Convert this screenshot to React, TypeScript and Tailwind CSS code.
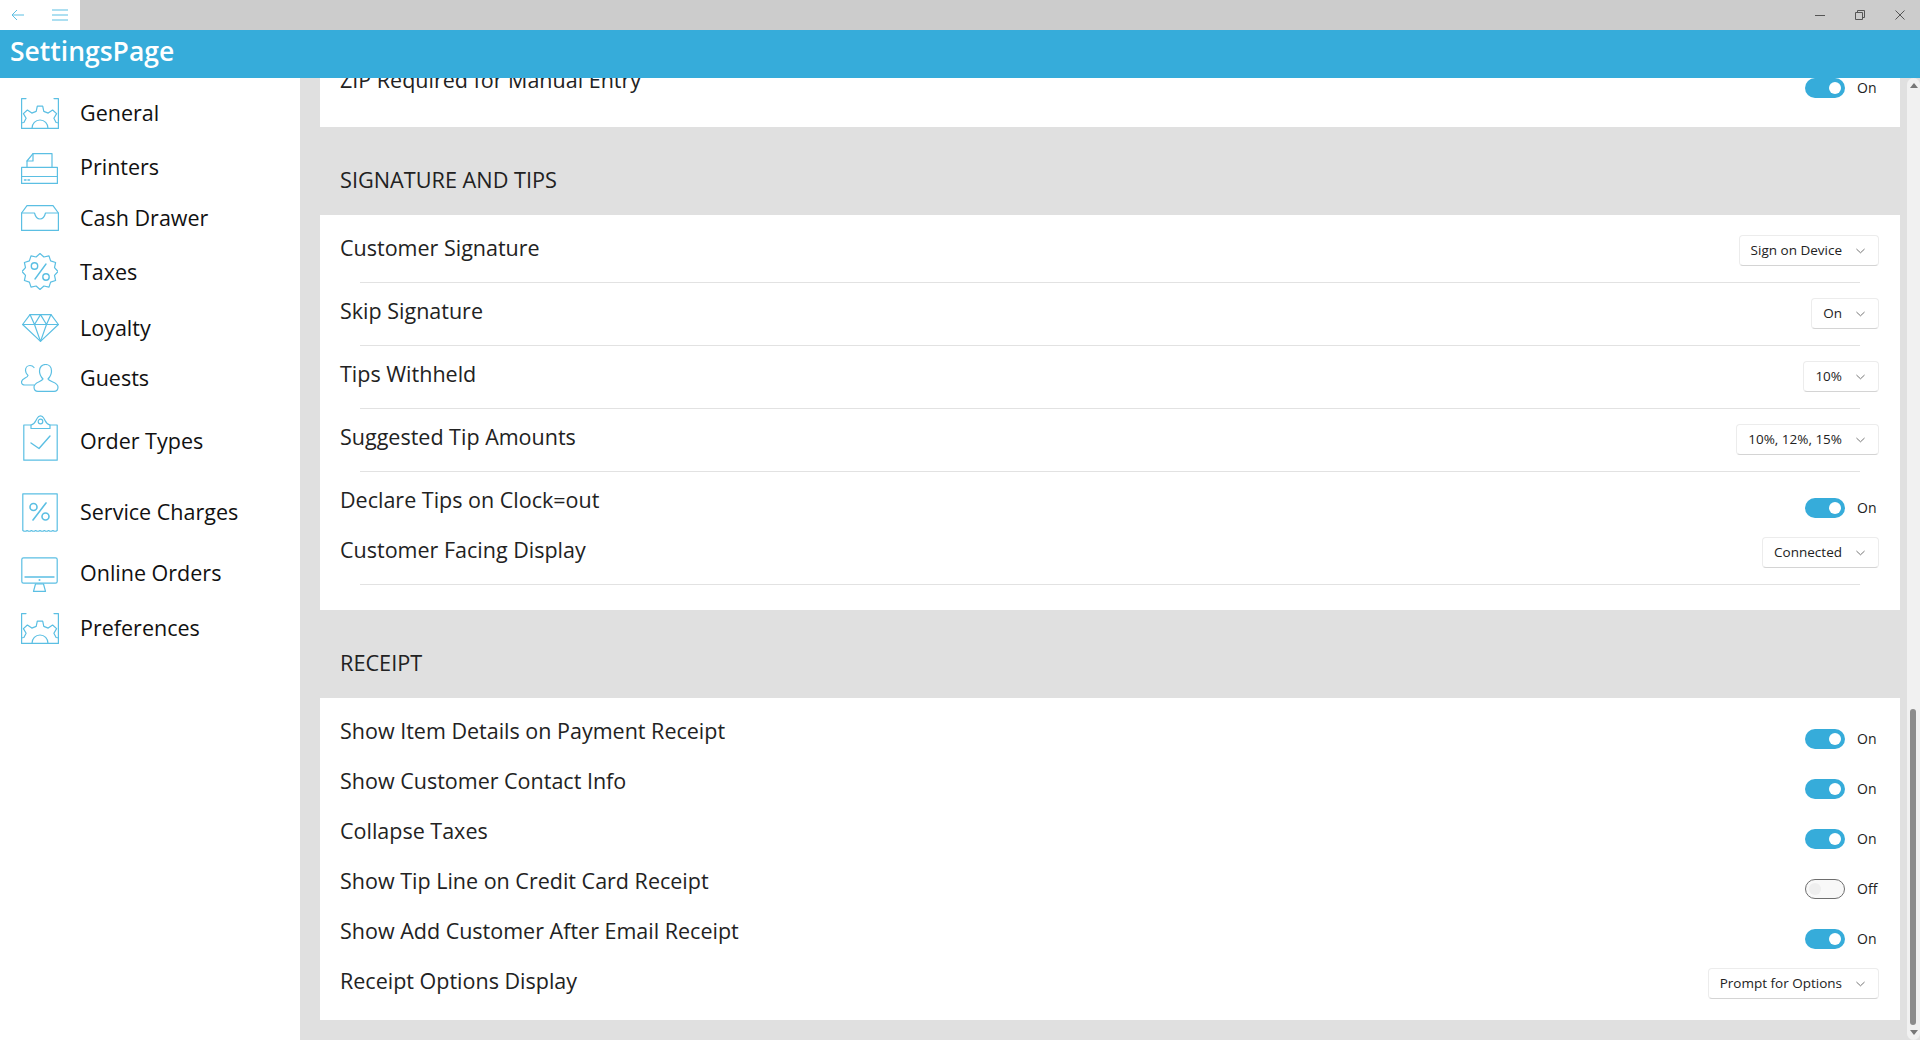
import React from "react";

const blue = "#36acda";
const stroke = "#5bbfe3";

function Ic({ children, w, h, cls }: { children: React.ReactNode; w: number; h: number; cls: string }) {
  return (
    <svg viewBox={`0 0 ${w} ${h}`} className={cls} fill="none" stroke={stroke} strokeWidth={1.2} strokeLinecap="round" strokeLinejoin="round">
      {children}
    </svg>
  );
}

function polar(cx: number, cy: number, r: number, deg: number) {
  const a = (deg * Math.PI) / 180;
  return `${(cx + r * Math.sin(a)).toFixed(1)} ${(cy - r * Math.cos(a)).toFixed(1)}`;
}

function gearPath() {
  const cx = 19;
  const cy = 30;
  const centers = [-84, -42, 0, 42, 84];
  const pts: string[] = [polar(cx, cy, 16, -100)];
  for (const c of centers) {
    pts.push(polar(cx, cy, 17, c - 13));
    pts.push(polar(cx, cy, 22, c - 7));
    pts.push(polar(cx, cy, 22, c + 7));
    pts.push(polar(cx, cy, 17, c + 13));
  }
  pts.push(polar(cx, cy, 16, 100));
  return "M" + pts.join("L");
}

function starPath() {
  const pts: string[] = [];
  for (let i = 0; i < 24; i++) {
    pts.push(polar(18, 18.5, i % 2 === 0 ? 18 : 15, i * 15));
  }
  return "M" + pts.join("L") + "Z";
}

const Gear = () => (
  <Ic w={38} h={31} cls="w-[38px] h-[31px]">
    <path d="M5 .6H.6V30.400H37.400V.6H33" />
    <path d={gearPath()} />
    <path d="M11 30.400c0-5 3.500-8.400 8-8.400s8 3.400 8 8.400" />
  </Ic>
);

const icons: Record<string, React.ReactNode> = {
  General: <Gear />,
  Printers: (
    <Ic w={37} h={31} cls="w-[37px] h-[31px] mt-[2px]">
      <path d="M6 14V8L12 .6H31V14" />
      <path d="M6 8H12V.6" />
      <path d="M.6 14.400H36.400V30.400H.6z" />
      <path d="M.6 23.500H36.400" />
      <path d="M3.500 27h1.500M7 27h1.500" strokeWidth={1.5} />
    </Ic>
  ),
  "Cash Drawer": (
    <Ic w={38} h={26} cls="w-[38px] h-[26px]">
      <path d="M6 .6H32L37.400 8V25.400H.6V8z" />
      <path d="M.6 8H13.500c1 4 2.500 6 5.500 6s4.500-2 5.500-6H37.400" />
    </Ic>
  ),
  Taxes: (
    <Ic w={36} h={37} cls="w-9 h-[37px] ml-[1px]">
      <path d={starPath()} />
      <path d="M24 11L13 26" strokeWidth={1.4} />
      <circle cx="12.500" cy="13" r="3.200" strokeWidth={1.4} />
      <circle cx="24" cy="24" r="3.200" strokeWidth={1.4} />
    </Ic>
  ),
  Loyalty: (
    <Ic w={37} h={28} cls="w-[37px] h-7 ml-[1px]">
      <path d="M8 .6H29L36.400 10.500 18.500 27.400 .6 10.500z" />
      <path d="M.6 10.500H36.400M8 .6L12.500 10.500 18.500 27.400 24.500 10.500 29 .6M12.500 10.500L18.500 .6 24.500 10.500" />
    </Ic>
  ),
  Guests: (
    <Ic w={39} h={28} cls="w-[39px] h-7">
      <path d="M13 21H4c-2.500 0-3.500-1-3.500-3 0-3.500 6-4 6.500-6.500C5.500 10 4.500 8 4.500 6.500 4.500 3.500 6.500 1.500 9 1.500c1.500 0 3 .6 4 2" />
      <path d="M13 23c0-5 7.500-5 9-8-2-2-3.500-4.500-3.500-8 0-4 2.500-6.500 6-6.500s6 2.500 6 6.500c0 3.500-1.500 6-3.500 8 1.500 3 10 3 10 8 0 3-1.500 4.400-4 4.400H17c-2.500 0-4-1.400-4-4.400z" />
    </Ic>
  ),
  "Order Types": (
    <Ic w={35} h={46} cls="w-[35px] h-[46px] ml-[2px] -mt-[7px]">
      <path d="M8 10H.8V45.200H34.200V10H27" />
      <path d="M8 13.500V10c4-1 4.500-4 6-6.500 2-3.600 5-3.600 7 0C22.500 6 23 9 27 10v3.500z" />
      <circle cx="17.500" cy="6.500" r="2.300" />
      <path d="M8 28l8 5.500L27 21" strokeWidth={1.4} />
    </Ic>
  ),
  "Service Charges": (
    <Ic w={36} h={39} cls="w-9 h-[39px] ml-[1px]">
      <path d="M.8.8H35.200V37.500c-1.400 1-2.800 1-4.300 0-1.400 1-2.800 1-4.300 0-1.400 1-2.800 1-4.300 0-1.400 1-2.800 1-4.300 0-1.400 1-2.800 1-4.300 0-1.400 1-2.800 1-4.300 0-1.400 1-2.800 1-4.300 0-1.400 1-2.800 1-4.300 0z" />
      <path d="M24 10L11 27" strokeWidth={1.6} />
      <circle cx="11.500" cy="14" r="3.500" strokeWidth={1.6} />
      <circle cx="23.500" cy="23.500" r="3.500" strokeWidth={1.6} />
    </Ic>
  ),
  "Online Orders": (
    <Ic w={37} h={35} cls="w-[37px] h-[35px] mt-[2px]">
      <path d="M2.500.8H34.500C35.500.8 36.200 1.500 36.200 2.500V24.500C36.200 25.500 35.500 26.200 34.500 26.200H2.500C1.500 26.200.8 25.500.8 24.500V2.500C.8 1.500 1.500.8 2.500.8z" />
      <path d="M4 20H33" strokeWidth={1.4} />
      <path d="M12.500 34.400L14.500 27H22.500L24.500 34.400z" />
      <circle cx="18.500" cy="23" r=".4" />
    </Ic>
  ),
  Preferences: <Gear />,
};

const nav: { name: string; h: string }[] = [
  { name: "General", h: "h-[54px]" },
  { name: "Printers", h: "h-[54px]" },
  { name: "Cash Drawer", h: "h-[48px]" },
  { name: "Taxes", h: "h-[59px]" },
  { name: "Loyalty", h: "h-[54px]" },
  { name: "Guests", h: "h-[46px]" },
  { name: "Order Types", h: "h-[80px]" },
  { name: "Service Charges", h: "h-[62px]" },
  { name: "Online Orders", h: "h-[60px]" },
  { name: "Preferences", h: "h-[50px]" },
];

function Toggle({ on }: { on: boolean }) {
  return (
    <div className="flex items-center w-[74px] mt-[25px]">
      {on ? (
        <div className="w-10 h-5 rounded-full bg-[#36acda] flex items-center justify-end pr-1">
          <div className="w-3 h-3 rounded-full bg-white" />
        </div>
      ) : (
        <div className="w-10 h-5 rounded-full bg-[#f8f8f8] border border-[#6e6e6e] flex items-center pl-[3px]">
          <div className="w-3 h-3 rounded-full bg-[#eeeeee]" />
        </div>
      )}
      <span className="ml-3 text-[14px] text-[#222222]">{on ? "On" : "Off"}</span>
    </div>
  );
}

function Select({ label }: { label: string }) {
  return (
    <div className="mt-[15px] h-[31px] flex items-center bg-white border border-[#ececec] border-b-[#d4d4d4] rounded-[4px] pl-[11px] pr-[13px]">
      <span className="text-[13.500px] text-[#222222] leading-none">{label}</span>
      <svg viewBox="0 0 10 6" className="w-[9px] h-[6px] ml-[14px]" fill="none" stroke="#666666" strokeWidth={1}>
        <path d="M.5.800 5 5 9.500.800" />
      </svg>
    </div>
  );
}

function Row({ label, tall, divider, toggle, select }: { label: string; tall?: boolean; divider?: boolean; toggle?: boolean; select?: string }) {
  return (
    <div className={`relative flex items-start justify-between pl-5 pr-[21px] ${tall ? "h-[63px]" : "h-[50px]"}`}>
      <span className="mt-[13px] text-[21.500px] text-[#222222] leading-[30px]">{label}</span>
      {select ? <Select label={select} /> : <Toggle on={!!toggle} />}
      {divider && <div className="absolute left-10 right-10 bottom-0 h-px bg-[#e2e2e2]" />}
    </div>
  );
}

function Section({ title }: { title: string }) {
  return <div className="h-[88px] pt-[38px] pl-5 text-[21.700px] leading-[30px] text-[#222222]">{title}</div>;
}

export default function App() {
  return (
    <div className="w-[1920px] h-[1040px] flex flex-col overflow-hidden bg-white" style={{ fontFamily: '"Open Sans", "Noto Sans", sans-serif' }}>
      <div className="h-[30px] shrink-0 bg-[#cccccc] flex justify-between">
        <div className="w-20 bg-white flex items-center">
          <svg viewBox="0 0 14 12" className="w-[14px] h-3 ml-[11px]" fill="none" stroke={stroke} strokeWidth={1}>
            <path d="M13 6H1M6 1 1 6l5 5" />
          </svg>
          <svg viewBox="0 0 16 12" className="w-4 h-3 ml-[27px]" fill="none" stroke={stroke} strokeWidth={1}>
            <path d="M0 1h16M0 6h16M0 11h16" />
          </svg>
        </div>
        <div className="flex items-center gap-[30px] pr-[15px] text-[#555555]">
          <svg viewBox="0 0 10 10" className="w-[10px] h-[10px]" fill="none" stroke="currentColor"><path d="M0 5.500h10" /></svg>
          <svg viewBox="0 0 10 10" className="w-[10px] h-[10px]" fill="none" stroke="currentColor"><path d="M.5 2.500h7v7h-7zM2.500 2.500v-2h7v7h-2" /></svg>
          <svg viewBox="0 0 10 10" className="w-[10px] h-[10px]" fill="none" stroke="currentColor"><path d="M.5.500l9 9M9.500.500l-9 9" /></svg>
        </div>
      </div>
      <div className="h-12 shrink-0 flex items-center pl-[10px] pb-[6px] text-white text-[26.500px] font-semibold leading-none" style={{ backgroundColor: blue }}>
        SettingsPage
      </div>
      <div className="flex-1 min-h-0 flex">
        <nav className="w-[300px] shrink-0 pt-2 bg-white">
          {nav.map((n) => (
            <div key={n.name} className={`flex items-center ${n.h}`}>
              <div className="w-20 pl-[21px] flex items-center">{icons[n.name]}</div>
              <span className="text-[21.500px] text-[#111111] leading-none">{n.name}</span>
            </div>
          ))}
        </nav>
        <main className="flex-1 min-w-0 bg-[#e0e0e0] flex overflow-hidden">
          <div className="w-[1580px] ml-5 shrink-0 -mt-[26px]">
            <div className="bg-white pb-[25px]">
              <Row label="ZIP Required for Manual Entry" toggle />
            </div>
            <Section title="SIGNATURE AND TIPS" />
            <div className="bg-white pt-[5px] pb-[25px]">
              <Row label="Customer Signature" tall divider select="Sign on Device" />
              <Row label="Skip Signature" tall divider select="On" />
              <Row label="Tips Withheld" tall divider select="10%" />
              <Row label="Suggested Tip Amounts" tall divider select="10%, 12%, 15%" />
              <Row label="Declare Tips on Clock=out" toggle />
              <Row label="Customer Facing Display" tall divider select="Connected" />
            </div>
            <Section title="RECEIPT" />
            <div className="bg-white pt-[5px] pb-[17px]">
              <Row label="Show Item Details on Payment Receipt" toggle />
              <Row label="Show Customer Contact Info" toggle />
              <Row label="Collapse Taxes" toggle />
              <Row label="Show Tip Line on Credit Card Receipt" />
              <Row label="Show Add Customer After Email Receipt" toggle />
              <Row label="Receipt Options Display" select="Prompt for Options" />
            </div>
          </div>
          <div className="w-[13px] ml-[7px] shrink-0 bg-[#f1f1f1] rounded-full flex flex-col items-center justify-between py-[3px] relative">
            <svg viewBox="0 0 8 5" className="w-2 h-[5px] mt-[2px]" fill="#777777"><path d="M4 0l4 5H0z" /></svg>
            <svg viewBox="0 0 8 5" className="w-2 h-[5px] mb-[2px]" fill="#777777"><path d="M4 5l4-5H0z" /></svg>
            <div className="absolute left-[3px] top-[631px] bottom-[15px] w-[6px] rounded-full bg-[#8c8c8c]" />
          </div>
        </main>
      </div>
    </div>
  );
}
